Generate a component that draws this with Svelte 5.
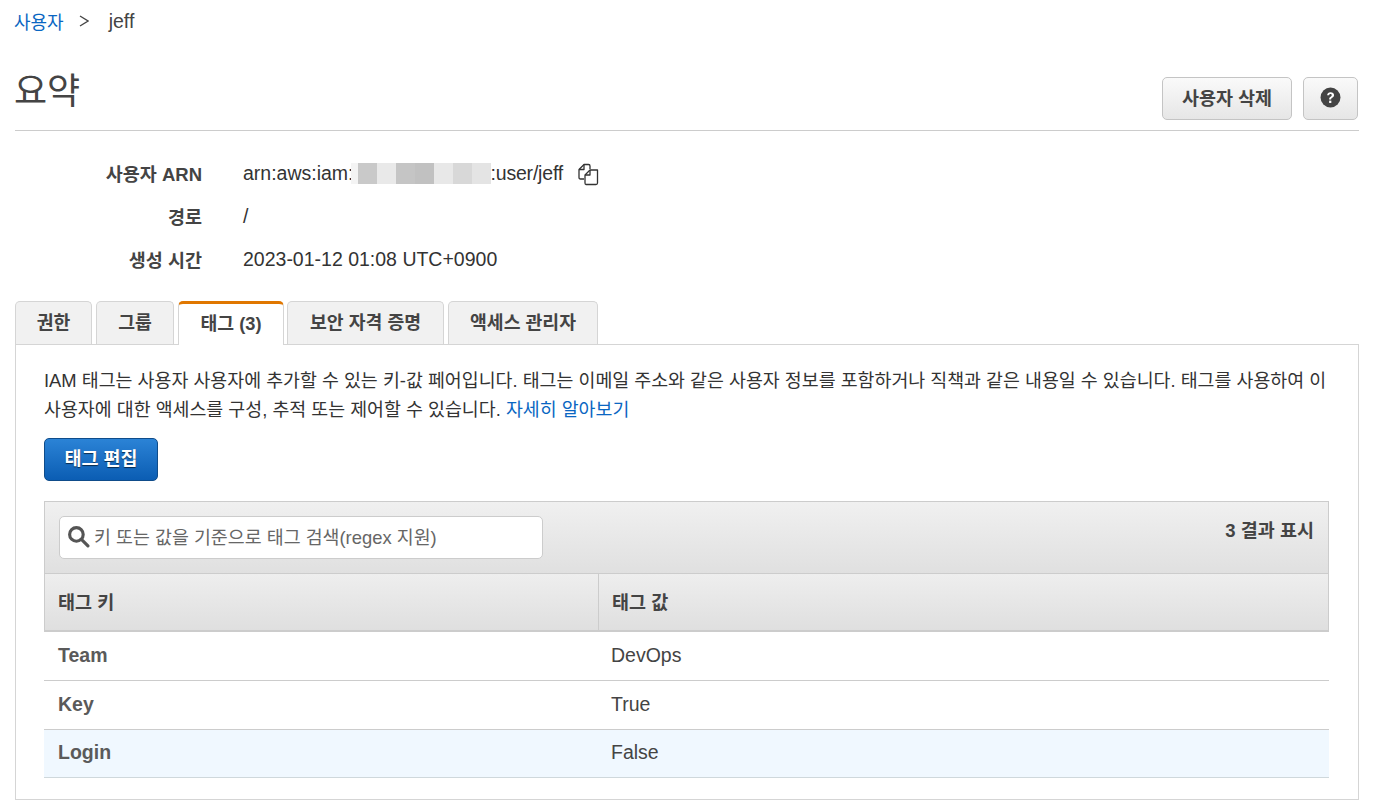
<script>
  const tabs = [
    { label: '권한', w: 77 },
    { label: '그룹', w: 78 },
    { label: '태그 (3)', w: 106, active: true },
    { label: '보안 자격 증명', w: 157 },
    { label: '액세스 관리자', w: 150 }
  ];
  const mask = ['#f4f4f4', '#c9c9c9', '#e9e9e9', '#c5c5c5', '#c1c1c1', '#e8e8e8', '#d8d8d8', '#e4e4e4'];
  const rows = [
    { k: 'Team', v: 'DevOps' },
    { k: 'Key', v: 'True' },
    { k: 'Login', v: 'False', selected: true }
  ];
</script>

<div class="page">
  <nav class="crumbs">
    <a href="#users">사용자</a>
    <svg class="chev" width="10" height="12" viewBox="0 0 10 12"><path d="M1 1 9 6l-8 5" fill="none" stroke="#444" stroke-width="1.300"/></svg>
    <span class="cur">jeff</span>
  </nav>

  <header class="head">
    <h1>요약</h1>
    <div class="actions">
      <button class="btn del">사용자 삭제</button>
      <button class="btn help" aria-label="도움말">
        <svg width="21" height="21" viewBox="0 0 20 20">
          <circle cx="10" cy="10" r="9.500" fill="#444"/>
          <path d="M6.800 7.800C6.900 5.900 8.200 4.900 10.100 4.900c1.900 0 3.300 1.100 3.300 2.800 0 1.300-.8 2-1.700 2.600-.8.500-1.100.8-1.100 1.600H8.700c0-1.500.5-2.100 1.400-2.700.7-.5 1.100-.8 1.100-1.400 0-.7-.5-1.100-1.200-1.100-.8 0-1.200.500-1.300 1.200H6.800z" fill="#fff"/>
          <rect x="8.700" y="13" width="2.100" height="2.200" fill="#fff"/>
        </svg>
      </button>
    </div>
  </header>

  <dl class="summary">
    <dt>사용자 ARN</dt>
    <dd class="arn">
      <span>arn:aws:iam:</span><span class="mask">{#each mask as c}<i style:background={c}></i>{/each}</span><span class="tail">:user/jeff</span>
      <svg class="copy" width="22" height="24" viewBox="0 0 22 24" fill="none" stroke="#333" stroke-width="1.300" stroke-linejoin="round">
        <path d="M7 17H3.500C2.500 17 2 16.500 2 15.500V7.500L7 2.500h4.500c1 0 1.500.5 1.500 1.500V7"/>
        <path d="M2 7.500h5V2.500"/>
        <path d="M9 22.500h10c1 0 1.500-.5 1.500-1.500V8H13l-5 5v8c0 1 .5 1.500 1 1.500z"/>
        <path d="M8 13h5V8"/>
      </svg>
    </dd>
    <dt>경로</dt>
    <dd>/</dd>
    <dt>생성 시간</dt>
    <dd>2023-01-12 01:08 UTC+0900</dd>
  </dl>

  <ul class="tabs">
    {#each tabs as t}
      <li class="tab" class:active={t.active} style:width="{t.w}px">{t.label}</li>
    {/each}
  </ul>

  <section class="panel">
    <p>IAM 태그는 사용자 사용자에 추가할 수 있는 키-값 페어입니다. 태그는 이메일 주소와 같은 사용자 정보를 포함하거나 직책과 같은 내용일 수 있습니다. 태그를 사용하여 이 사용자에 대한 액세스를 구성, 추적 또는 제어할 수 있습니다. <a href="#more">자세히 알아보기</a></p>
    <button class="primary">태그 편집</button>

    <div class="table">
      <div class="toolbar">
        <div class="search">
          <svg width="23" height="23" viewBox="0 0 22 22" fill="none" stroke="#555" stroke-width="3">
            <circle cx="9" cy="9" r="6.500"/>
            <path d="M13.800 13.800 20 20" stroke-linecap="round"/>
          </svg>
          <span>키 또는 값을 기준으로 태그 검색(regex 지원)</span>
        </div>
        <strong>3 결과 표시</strong>
      </div>
      <div class="thead">
        <div class="c1">태그 키</div>
        <div class="c2">태그 값</div>
      </div>
      {#each rows as r}
        <div class="row" class:selected={r.selected}>
          <div class="c1 key">{r.k}</div>
          <div class="c2">{r.v}</div>
        </div>
      {/each}
    </div>
  </section>
</div>

<style>
  :global(body) {
    margin: 0;
    background: #fff;
  }
  .page {
    box-sizing: border-box;
    width: 1380px;
    height: 808px;
    overflow: hidden;
    padding: 0 21px 0 15px;
    font-family: "Liberation Sans", "Noto Sans CJK KR", sans-serif;
    font-size: 19.500px;
    color: #444;
  }
  a {
    color: #0a66c2;
    text-decoration: none;
  }
  .crumbs {
    height: 42px;
    display: flex;
    align-items: center;
    font-size: 18px;
    margin-left: -1px;
  }
  .cur {
    font-size: 19.500px;
  }
  .chev {
    margin: 0 20px 0 15px;
  }
  .head {
    height: 88px;
    display: flex;
    justify-content: space-between;
    border-bottom: 1px solid #ccc;
  }
  h1 {
    margin: 0 0 0 -1px;
    padding-top: 25px;
    font-size: 36px;
    line-height: 50px;
    font-weight: 400;
  }
  .actions {
    display: flex;
    gap: 11px;
    padding-top: 35px;
    height: 43px;
    margin-right: 1px;
  }
  .btn {
    box-sizing: border-box;
    height: 43px;
    border: 1px solid #c4c4c4;
    border-radius: 5px;
    background: linear-gradient(#fafafa, #e6e6e6);
    color: #444;
    font: bold 18.500px "Liberation Sans", "Noto Sans CJK KR", sans-serif;
    padding: 0 0 4px;
    display: flex;
    align-items: center;
    justify-content: center;
  }
  .del {
    width: 130px;
  }
  .help {
    width: 55px;
    padding-bottom: 2px;
  }
  .summary {
    display: grid;
    grid-template-columns: 187px 1fr;
    grid-auto-rows: 43px;
    column-gap: 41px;
    margin: 21px 0 20px;
    align-items: center;
  }
  dt {
    text-align: right;
    font-weight: 700;
    font-size: 18.500px;
    padding-bottom: 2px;
  }
  dd {
    margin: 0;
    color: #333;
  }
  .arn {
    display: flex;
    align-items: center;
  }
  .mask {
    display: flex;
    height: 21px;
    margin-left: -3px;
  }
  .mask i {
    width: 19px;
  }
  .mask i:first-child {
    width: 7px;
  }
  .tail {
    letter-spacing: -.2px;
  }
  .copy {
    margin-left: 14px;
  }
  .tabs {
    list-style: none;
    margin: 0;
    padding: 0;
    display: flex;
    gap: 4px;
    height: 43px;
    position: relative;
    z-index: 1;
  }
  .tab {
    box-sizing: border-box;
    height: 43px;
    border: 1px solid #d5d5d5;
    border-bottom: 0;
    border-radius: 5px 5px 0 0;
    background: #f1f1f1;
    display: flex;
    align-items: center;
    justify-content: center;
    padding-bottom: 5px;
    font-weight: 700;
    font-size: 18.300px;
  }
  .tab.active {
    height: 44px;
    margin-right: -1px;
    background: #fff;
    border-top: 3px solid #e07700;
  }
  .panel {
    box-sizing: border-box;
    height: 456px;
    border: 1px solid #d5d5d5;
    padding: 21px 28px 0;
  }
  p {
    margin: 0;
    line-height: 29px;
    font-size: 18.390px;
    color: #333;
  }
  .primary {
    display: block;
    box-sizing: border-box;
    width: 114px;
    height: 43px;
    margin: 14px 0 20px;
    padding: 0 0 5px;
    border: 1px solid #0f4c8a;
    border-radius: 5px;
    background: linear-gradient(#2b83d6, #0b5db3);
    color: #fff;
    text-shadow: 0 1px 1px rgba(0, 0, 0, .6);
    font: bold 18.500px "Liberation Sans", "Noto Sans CJK KR", sans-serif;
  }
  .table {
    width: 1285px;
  }
  .toolbar {
    box-sizing: border-box;
    height: 73px;
    display: flex;
    justify-content: space-between;
    padding: 14px 14px 0;
    border: 1px solid #ccc;
    background: linear-gradient(#f0f0f0, #e0e0e0);
  }
  .toolbar strong {
    font-size: 18.500px;
  }
  .search {
    box-sizing: border-box;
    width: 484px;
    height: 43px;
    display: flex;
    align-items: center;
    gap: 4px;
    padding: 0 0 3px 7px;
    border: 1px solid #ccc;
    border-radius: 5px;
    background: #fff;
    color: #666;
    font-size: 18.400px;
  }
  .thead {
    box-sizing: border-box;
    height: 58px;
    display: flex;
    align-items: center;
    border: 1px solid #ccc;
    border-top: 0;
    border-bottom-width: 2px;
    background: linear-gradient(#eeeeee, #dfdfdf);
    font-weight: 700;
    font-size: 18.500px;
  }
  .thead .c1 {
    height: 100%;
    display: flex;
    align-items: center;
    box-sizing: border-box;
    width: 554px;
    border-right: 1px solid #ccc;
    padding: 0 0 2px 13px;
  }
  .thead .c2 {
    padding: 0 0 2px 13px;
  }
  .row {
    box-sizing: border-box;
    height: 49px;
    display: flex;
    align-items: center;
    padding-bottom: 2px;
    border-bottom: 1px solid #ccc;
    color: #444;
  }
  .row:last-child {
    height: 48px;
  }
  .row.selected {
    background: #f0f8ff;
    border-bottom-color: #cfd8dc;
  }
  .row .c1 {
    box-sizing: border-box;
    width: 567px;
    padding-left: 14px;
  }
  .key {
    font-weight: 700;
    color: #5a5a5a;
  }
</style>
